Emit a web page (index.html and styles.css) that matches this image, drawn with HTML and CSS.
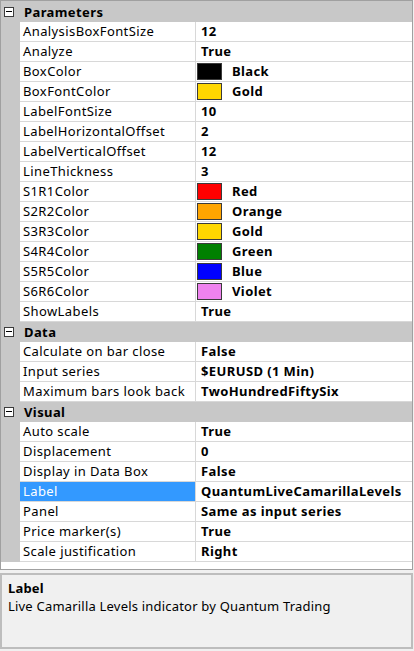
FILE: index.html
```html
<!DOCTYPE html>
<html>
<head>
<meta charset="utf-8">
<link rel="stylesheet" href="styles.css">
</head>
<body>
<div class="page">
  <div class="grid">
    <div class="cat first"><span class="toggle"></span><span class="cat-name">Parameters</span></div>
    <div class="row"><div class="gut"></div><div class="name">AnalysisBoxFontSize</div><div class="val">12</div></div>
    <div class="row"><div class="gut"></div><div class="name">Analyze</div><div class="val">True</div></div>
    <div class="row"><div class="gut"></div><div class="name">BoxColor</div><div class="val color"><span class="sw sw-black"></span>Black</div></div>
    <div class="row"><div class="gut"></div><div class="name">BoxFontColor</div><div class="val color"><span class="sw sw-gold"></span>Gold</div></div>
    <div class="row"><div class="gut"></div><div class="name">LabelFontSize</div><div class="val">10</div></div>
    <div class="row"><div class="gut"></div><div class="name">LabelHorizontalOffset</div><div class="val">2</div></div>
    <div class="row"><div class="gut"></div><div class="name">LabelVerticalOffset</div><div class="val">12</div></div>
    <div class="row"><div class="gut"></div><div class="name">LineThickness</div><div class="val">3</div></div>
    <div class="row"><div class="gut"></div><div class="name">S1R1Color</div><div class="val color"><span class="sw sw-red"></span>Red</div></div>
    <div class="row"><div class="gut"></div><div class="name">S2R2Color</div><div class="val color"><span class="sw sw-orange"></span>Orange</div></div>
    <div class="row"><div class="gut"></div><div class="name">S3R3Color</div><div class="val color"><span class="sw sw-gold"></span>Gold</div></div>
    <div class="row"><div class="gut"></div><div class="name">S4R4Color</div><div class="val color"><span class="sw sw-green"></span>Green</div></div>
    <div class="row"><div class="gut"></div><div class="name">S5R5Color</div><div class="val color"><span class="sw sw-blue"></span>Blue</div></div>
    <div class="row"><div class="gut"></div><div class="name">S6R6Color</div><div class="val color"><span class="sw sw-violet"></span>Violet</div></div>
    <div class="row"><div class="gut"></div><div class="name">ShowLabels</div><div class="val">True</div></div>
    <div class="cat"><span class="toggle"></span><span class="cat-name">Data</span></div>
    <div class="row"><div class="gut"></div><div class="name">Calculate on bar close</div><div class="val">False</div></div>
    <div class="row"><div class="gut"></div><div class="name">Input series</div><div class="val">$EURUSD (1 Min)</div></div>
    <div class="row"><div class="gut"></div><div class="name">Maximum bars look back</div><div class="val">TwoHundredFiftySix</div></div>
    <div class="cat"><span class="toggle"></span><span class="cat-name">Visual</span></div>
    <div class="row"><div class="gut"></div><div class="name">Auto scale</div><div class="val">True</div></div>
    <div class="row"><div class="gut"></div><div class="name">Displacement</div><div class="val">0</div></div>
    <div class="row"><div class="gut"></div><div class="name">Display in Data Box</div><div class="val">False</div></div>
    <div class="row selected"><div class="gut"></div><div class="name">Label</div><div class="val">QuantumLiveCamarillaLevels</div></div>
    <div class="row"><div class="gut"></div><div class="name">Panel</div><div class="val">Same as input series</div></div>
    <div class="row"><div class="gut"></div><div class="name">Price marker(s)</div><div class="val">True</div></div>
    <div class="row"><div class="gut"></div><div class="name">Scale justification</div><div class="val">Right</div></div>
    <div class="filler"></div>
  </div>
  <div class="desc">
    <div class="desc-title">Label</div>
    <div class="desc-text">Live Camarilla Levels indicator by Quantum Trading</div>
  </div>
</div>
</body>
</html>
```

FILE: styles.css
```css
html, body {
  margin: 0;
  padding: 0;
  background: #ffffff;
}
body {
  font-family: "Noto Sans", "Liberation Sans", sans-serif;
  font-size: 13px;
  letter-spacing: 0.4px;
  color: #000;
}
.page {
  width: 414px;
  height: 651px;
  display: flex;
  flex-direction: column;
  background: #f0f0f0;
}
.grid {
  width: 413px;
  box-sizing: border-box;
  border: 1px solid #a0a0a0;
  background: #ffffff;
}
.cat {
  height: 20px;
  background: #c8c8c8;
  display: flex;
  align-items: center;
}
.cat.first {
  height: 21px;
}
.toggle {
  width: 10px;
  height: 10px;
  box-sizing: border-box;
  border: 1px solid #3c3c3c;
  background: #ffffff;
  margin-left: 3px;
  position: relative;
}
.toggle::after {
  content: "";
  position: absolute;
  left: 1px;
  right: 1px;
  top: 3px;
  height: 1px;
  background: #000;
}
.cat-name {
  font-weight: bold;
  margin-left: 10px;
  line-height: 20px;
}
.row {
  display: grid;
  grid-template-columns: 19px 176px 1fr;
  height: 20px;
}
.gut {
  background: #c8c8c8;
}
.name, .val {
  box-sizing: border-box;
  border-bottom: 1px solid #d8d8d8;
  line-height: 19px;
  white-space: nowrap;
  overflow: hidden;
}
.name {
  border-right: 1px solid #d8d8d8;
  padding-left: 3px;
}
.val {
  padding-left: 5px;
  font-weight: bold;
}
.val.color {
  padding-left: 1px;
  display: flex;
  align-items: center;
}
.sw {
  width: 25px;
  height: 17px;
  flex: none;
  box-sizing: border-box;
  border: 1px solid #3a3a3a;
  margin-right: 10px;
}
.sw-black { background: #000000; }
.sw-gold { background: #ffd700; }
.sw-red { background: #ff0000; }
.sw-orange { background: #ffa500; }
.sw-green { background: #008000; }
.sw-blue { background: #0000ff; }
.sw-violet { background: #ee82ee; }
.selected .name {
  background: #3399ff;
  color: #ffffff;
}
.filler {
  height: 7px;
}
.desc {
  margin-top: 3px;
  width: 413px;
  height: 76px;
  box-sizing: border-box;
  border: 2px solid #bdbdbd;
  background: #f0f0f0;
  padding: 4px 0 0 6px;
  letter-spacing: 0.2px;
}
.desc-title {
  font-weight: bold;
  line-height: 18px;
}
.desc-text {
  line-height: 18px;
}
```
